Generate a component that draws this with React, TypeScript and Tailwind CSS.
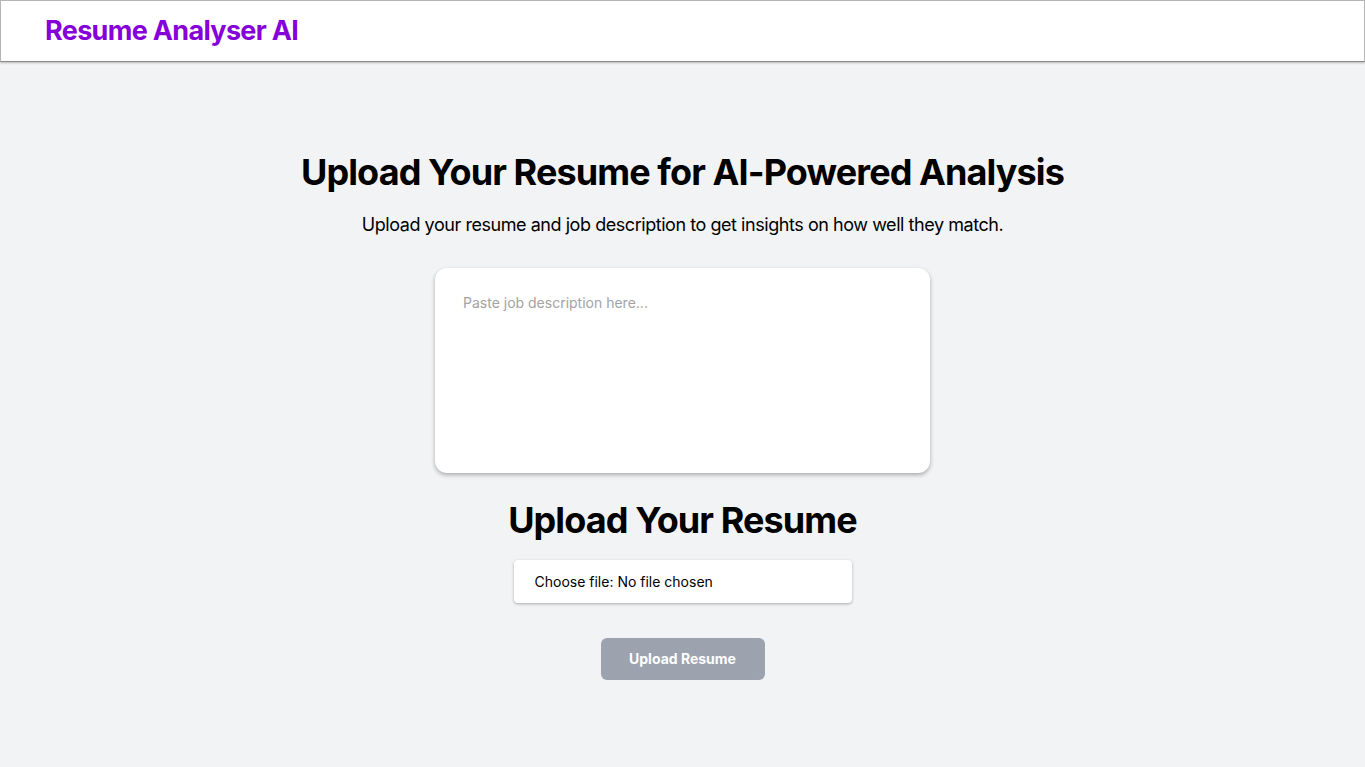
import { useState } from 'react';

export default function App() {
  const [jobDesc, setJobDesc] = useState('');

  return (
    <div className="min-h-screen bg-[#f2f3f5] font-['Inter',sans-serif] text-black">
      {/* header */}
      <header className="flex h-[62px] items-center border border-[#b5b5b5] border-b-[#8a8a8a] bg-white px-11 shadow-[0_1px_2px_rgba(0,0,0,0.25)]">
        <h1 className="text-[27px] font-bold tracking-tight text-[#8600d9]">Resume Analyser AI</h1>
      </header>

      <main className="flex flex-col items-center pt-[90px]">
        <h2 className="text-4xl font-bold tracking-tight">Upload Your Resume for AI-Powered Analysis</h2>
        <p className="mt-[19px] text-lg tracking-tight">
          Upload your resume and job description to get insights on how well they match.
        </p>

        <textarea
          value={jobDesc}
          onChange={(e) => setJobDesc(e.target.value)}
          placeholder="Paste job description here..."
          className="mt-[29px] h-[205px] w-[495px] resize-none rounded-xl bg-white px-7 pt-[25px] pb-7 text-sm shadow-[0_2px_4px_rgba(0,0,0,0.3)] outline-none placeholder:text-[#a3a3a3]"
        />

        <h2 className="mt-[27px] text-4xl font-bold tracking-tight">Upload Your Resume</h2>

        <div className="mt-5 flex h-[43px] w-[338px] items-center rounded-sm bg-white px-[21px] text-sm shadow-[0_1px_3px_rgba(0,0,0,0.3)]">
          Choose file: No file chosen
        </div>

        <button
          disabled
          className="mt-[35px] h-[42px] w-[164px] rounded-md bg-[#9ca3af] text-sm font-bold text-white"
        >
          Upload Resume
        </button>
      </main>
    </div>
  );
}
